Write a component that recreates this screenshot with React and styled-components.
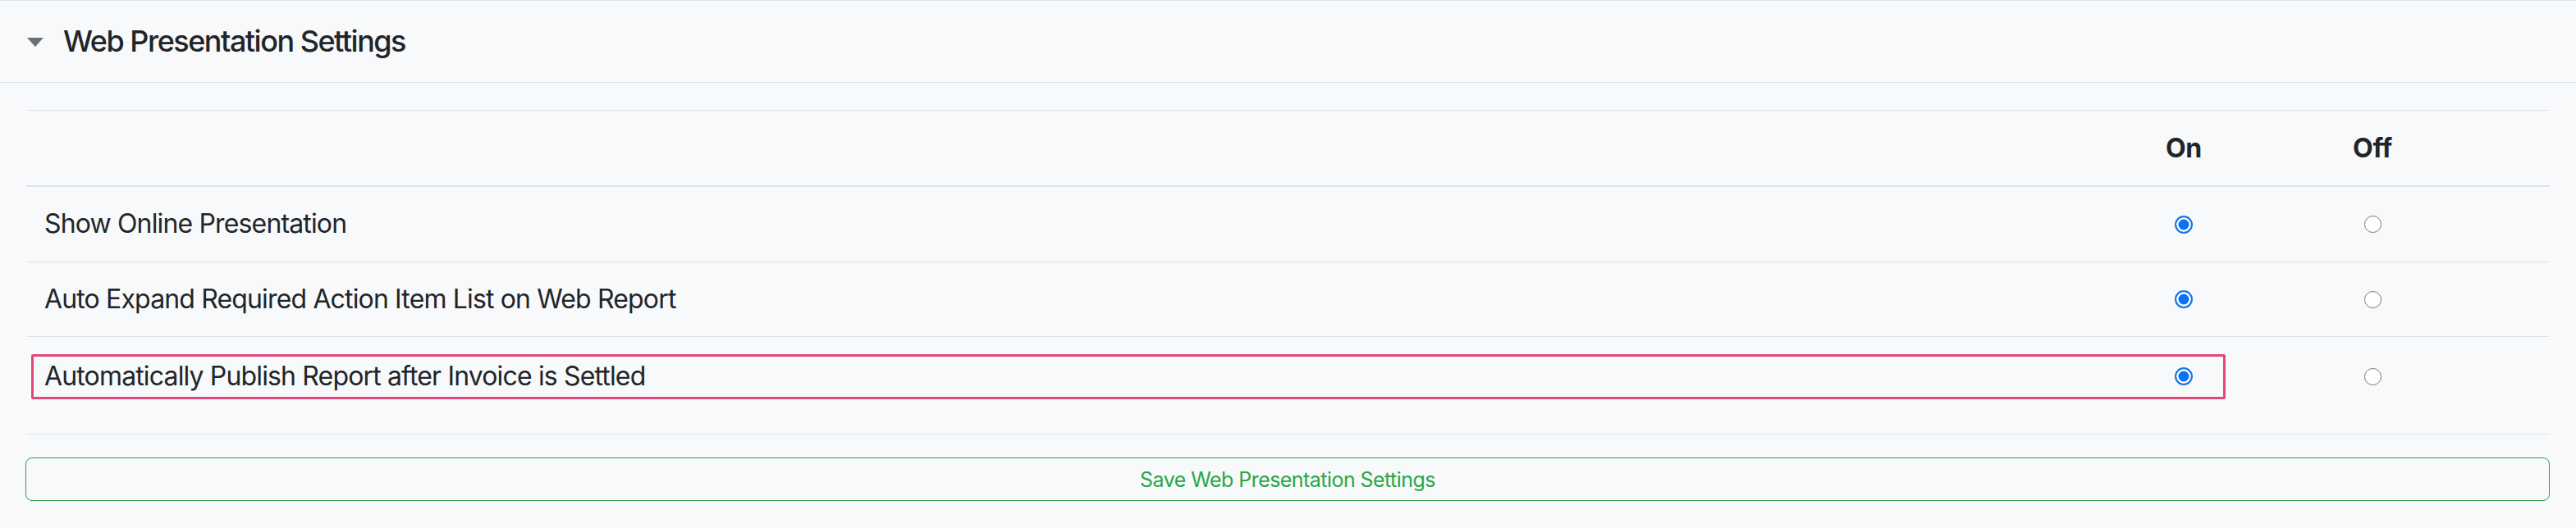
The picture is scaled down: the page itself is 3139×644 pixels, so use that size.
import React, { useState } from "react";
import styled, { createGlobalStyle } from "styled-components";

const GlobalStyle = createGlobalStyle`
  html, body {
    margin: 0;
    padding: 0;
    background: #f8f9fa;
  }
  body {
    font-family: Inter, "Liberation Sans", Arial, sans-serif;
    color: #212529;
  }
`;

const Panel = styled.section`
  border-top: 1px solid #dee2e6;
  background: #f8f9fa;
  min-height: 643px;
`;

const PanelHeader = styled.header`
  display: flex;
  align-items: center;
  height: 99px;
  padding-left: 33px;
  gap: 24px;
  border-bottom: 1px solid #dee2e6;
`;

const Caret = styled.svg`
  width: 20px;
  height: 11px;
  flex: none;
  margin-top: 2px;
`;

const Title = styled.h5`
  margin: 0;
  font-size: 36px;
  font-weight: 500;
  letter-spacing: -1.5px;
  line-height: 1.2;
`;

const PanelBody = styled.div`
  padding: 33px 32px 0 32px;
`;

const Grid = styled.div`
  display: grid;
  grid-template-columns: 1fr 230px 230px 101px;
  border-top: 1px solid #dee2e6;
`;

const Row = styled.div`
  position: relative;
  display: grid;
  grid-column: 1 / -1;
  grid-template-columns: subgrid;
  align-items: center;
  height: ${(p) => p.$height}px;
  padding: ${(p) => p.$padTop || 0}px 0 ${(p) => p.$padBottom || 0}px;
  box-sizing: content-box;
  border-bottom: ${(p) => (p.$head ? 2 : 1)}px solid #dee2e6;
`;

const HeadCell = styled.div`
  font-size: 32px;
  font-weight: 700;
  text-align: center;
  letter-spacing: -0.3px;
`;

const Label = styled.div`
  padding-left: 22px;
  font-size: 32px;
  letter-spacing: -0.85px;
  line-height: 1.4;
`;

const RadioCell = styled.div`
  display: flex;
  justify-content: center;
  align-items: center;
`;

const Radio = styled.input.attrs({ type: "radio" })`
  appearance: none;
  margin: 0;
  width: 21px;
  height: 21px;
  border-radius: 50%;
  box-sizing: border-box;
  background: #fff;
  border: 1.5px solid #767676;
  cursor: pointer;

  &:checked {
    width: 22px;
    height: 22px;
    border: 2px solid #1a76e8;
    box-shadow: inset 0 0 0 2.5px #fff;
    background: #0b70f2;
  }
`;

const Highlight = styled.div`
  position: absolute;
  top: 21px;
  left: 6px;
  width: 2674px;
  height: 55px;
  box-sizing: border-box;
  border: 3px solid #e4477b;
  border-radius: 2px;
  pointer-events: none;
`;

const SaveButton = styled.button`
  display: block;
  height: 53px;
  margin-top: 28px;
  margin-left: -1px;
  width: calc(100% + 1px);
  background: transparent;
  border: 1.5px solid #2f9a4f;
  border-radius: 8px;
  color: #28a745;
  font-family: Inter, "Liberation Sans", Arial, sans-serif;
  font-size: 25px;
  letter-spacing: -0.55px;
  cursor: pointer;
`;

const settings = [
  { key: "online", label: "Show Online Presentation", height: 91 },
  { key: "expand", label: "Auto Expand Required Action Item List on Web Report", height: 90 },
  {
    key: "publish",
    label: "Automatically Publish Report after Invoice is Settled",
    height: 56,
    padTop: 20,
    padBottom: 42,
    highlight: true,
  },
];

export default function App() {
  const [values, setValues] = useState({ online: true, expand: true, publish: true });

  const set = (key, on) => setValues((v) => ({ ...v, [key]: on }));

  return (
    <>
      <GlobalStyle />
      <Panel>
        <PanelHeader>
          <Caret viewBox="0 0 20 11">
            <path d="M0 0 L20 0 L10 11 Z" fill="#6d7073" />
          </Caret>
          <Title>Web Presentation Settings</Title>
        </PanelHeader>
        <PanelBody>
          <Grid>
            <Row $head $height={91}>
              <div />
              <HeadCell>On</HeadCell>
              <HeadCell>Off</HeadCell>
              <div />
            </Row>
            {settings.map((s) => (
              <Row
                key={s.key}
                $height={s.height}
                $padTop={s.padTop}
                $padBottom={s.padBottom}
              >
                {s.highlight && <Highlight />}
                <Label>{s.label}</Label>
                <RadioCell>
                  <Radio
                    name={s.key}
                    checked={values[s.key]}
                    onChange={() => set(s.key, true)}
                  />
                </RadioCell>
                <RadioCell>
                  <Radio
                    name={s.key}
                    checked={!values[s.key]}
                    onChange={() => set(s.key, false)}
                  />
                </RadioCell>
                <div />
              </Row>
            ))}
          </Grid>
          <SaveButton type="button">Save Web Presentation Settings</SaveButton>
        </PanelBody>
      </Panel>
    </>
  );
}
